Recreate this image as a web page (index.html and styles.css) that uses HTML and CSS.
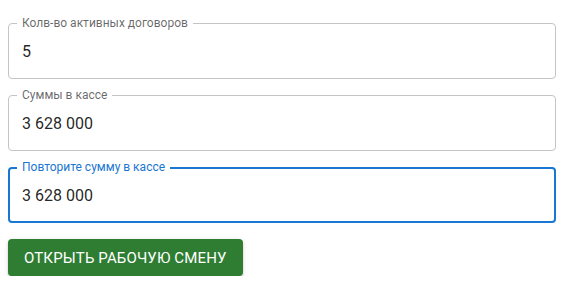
FILE: index.html
```html
<!DOCTYPE html>
<html>
<head>
	<meta charset="utf-8">
	<title>Открытие смены</title>
	<link rel="stylesheet" href="styles.css">
</head>
<body>
	<form class="shift">
		<div class="field">
			<label class="field_label">Колв-во активных договоров</label>
			<input class="field_input" type="text" value="5">
		</div>
		<div class="field">
			<label class="field_label">Суммы в кассе</label>
			<input class="field_input" type="text" value="3 628 000">
		</div>
		<div class="field focused">
			<label class="field_label">Повторите сумму в кассе</label>
			<input class="field_input" type="text" value="3 628 000">
		</div>
		<button class="btn_open" type="button">Открыть рабочую смену</button>
	</form>
</body>
</html>
```

FILE: styles.css
```css
*{
	margin: 0;
	padding: 0;
	box-sizing: border-box;
}
body{
	background: #fff;
	font-family: Roboto, "Noto Sans", sans-serif;
	padding: 23px 12px 0 8px;
}
.shift{
	display: flex;
	flex-direction: column;
	align-items: flex-start;
	gap: 16px;
}
.field{
	position: relative;
	width: 100%;
	height: 56px;
	border: 1px solid #c4c4c4;
	border-radius: 4px;
}
.field_label{
	position: absolute;
	left: 8px;
	top: -8px;
	padding: 0 5px;
	background: #fff;
	font-size: 12px;
	line-height: 14px;
	color: rgba(0,0,0,0.6);
}
.field_input{
	display: block;
	width: 100%;
	height: 100%;
	padding: 0 13px;
	border: none;
	outline: none;
	background: transparent;
	font-family: Roboto, "Noto Sans", sans-serif;
	font-size: 16px;
	color: rgba(0,0,0,0.87);
}
.focused{
	border: 2px solid #1976d2;
}
.focused .field_label{
	left: 7px;
	top: -9px;
	color: #1976d2;
}
.focused .field_input{
	padding: 0 12px;
}
.btn_open{
	height: 37px;
	padding: 0 16px;
	border: none;
	border-radius: 4px;
	background: #2e7d32;
	color: #fff;
	font-family: Roboto, "Noto Sans", sans-serif;
	font-size: 15px;
	font-weight: 400;
	letter-spacing: 0.15px;
	text-transform: uppercase;
	box-shadow: 0 3px 1px -2px rgba(0,0,0,0.2), 0 2px 2px 0 rgba(0,0,0,0.14), 0 1px 5px 0 rgba(0,0,0,0.12);
	cursor: pointer;
}
```
